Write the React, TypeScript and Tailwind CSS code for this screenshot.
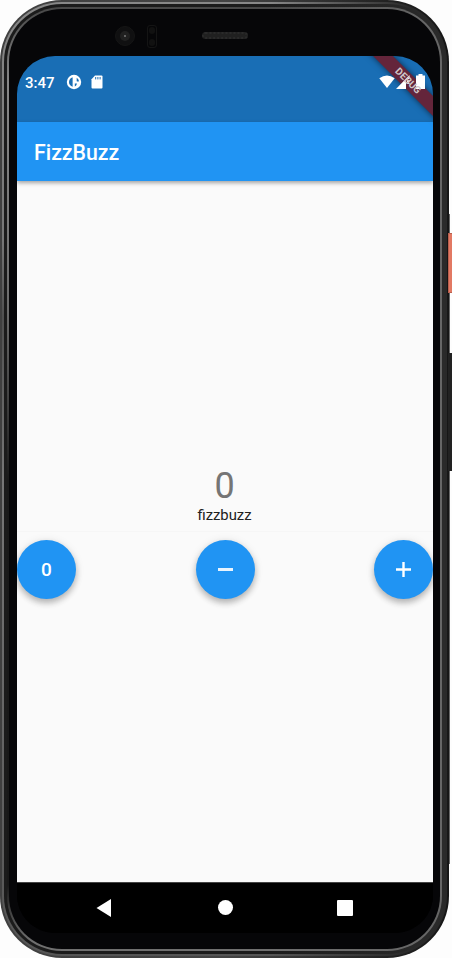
import React from "react";

function StatusBar() {
  return (
    <div className="flex h-[66px] shrink-0 items-start bg-[#196eb5] pl-[8px] pr-[8px] pt-[18px] text-white">
      <span className="w-[41px] text-[15px] font-medium leading-[18px]">3:47</span>
      <svg className="h-4 w-4" viewBox="0 0 16 16">
        <circle cx="8" cy="8" r="7.2" fill="#fff" />
        <path d="M6.600 3.200v9.600C4.400 12.200 3 10.300 3 8s1.400-4.200 3.600-4.800z" fill="#196eb5" />
        <path d="M10.700 3.700a4.800 4.800 0 0 1 2.300 3.500q-1.300.8-2.300 0z" fill="#196eb5" />
        <path d="M8.800 9.400H11q-.6 2.400-2.200 3z" fill="#196eb5" />
      </svg>
      <svg className="ml-[9px] mt-[1px] h-[14px] w-[12px]" viewBox="0 0 12 14">
        <path d="M4 0.500h6.500q1 0 1 1v11q0 1-1 1h-9q-1 0-1-1V4.200z" fill="#fff" />
        <path d="M4.700 2v2.400M6.900 2v2.400M9.100 2v2.400" stroke="#196eb5" strokeWidth="1" />
      </svg>
      <div className="relative z-30 ml-auto flex">
        <svg className="mt-px h-[14px] w-[16px]" viewBox="0 0 16 14">
          <path d="M0.300 3.200Q8-2.200 15.700 3.200L8 13z" fill="#fff" />
        </svg>
        <svg className="ml-px h-[15px] w-[14px]" viewBox="0 0 14 15">
          <path d="M0 15L13.500 1v4H10v10z" fill="#fff" />
          <path d="M11 6.500l2.500 3M13.500 6.500l-2.500 3" stroke="#fff" strokeWidth="1.200" />
        </svg>
        <svg className="ml-[6px] h-[15px] w-[9px]" viewBox="0 0 9 15">
          <path d="M2.500 0h4v1.500H9V15H0V1.500h2.500z" fill="#fff" />
        </svg>
      </div>
    </div>
  );
}

function FloatingButton({ children }: { children: React.ReactNode }) {
  return (
    <button className="flex h-[59px] w-[59px] items-center justify-center rounded-full bg-[#2094f3] text-[19px] font-medium text-white shadow-[0_4px_6px_rgba(0,0,0,0.24),0_1px_10px_rgba(0,0,0,0.10)]">
      {children}
    </button>
  );
}

function NavigationBar() {
  return (
    <div className="flex h-[51px] shrink-0 items-center border-t border-[#444] bg-black pb-px">
      <svg className="ml-[79px] h-[18px] w-[15px]" viewBox="0 0 15 18">
        <path d="M15 0v18L0.500 9z" fill="#fff" />
      </svg>
      <div className="ml-[107px] h-[15px] w-[15px] rounded-full bg-white" />
      <div className="ml-[104px] h-4 w-4 rounded-[1px] bg-white" />
    </div>
  );
}

function Screen() {
  return (
    <div className="relative flex h-[877px] w-[416px] flex-col overflow-hidden rounded-[38px] bg-black">
      <StatusBar />
      <header className="z-10 flex h-[59px] shrink-0 items-center bg-[#2094f3] pl-[17px] pt-[3px] text-[21.300px] font-medium text-white shadow-[0_2px_4px_rgba(0,0,0,0.35)]">
        FizzBuzz
      </header>
      <main className="flex grow flex-col bg-[#fafafa] pt-[285px]">
        <div className="pr-px text-center text-[36px] leading-[40px] text-[#757575]">0</div>
        <div className="pr-px text-center text-[14.800px] leading-[18px] text-[#202020]">fizzbuzz</div>
        <div className="mt-[7px] border-t border-[#f6f6f6]" />
        <div className="mt-[8px] flex justify-between">
          <FloatingButton>
            <span className="pt-[2px]">0</span>
          </FloatingButton>
          <FloatingButton>
            <span className="h-[3px] w-[15px] bg-white/90" />
          </FloatingButton>
          <FloatingButton>
            <svg className="h-[15px] w-[15px]" viewBox="0 0 15 15">
              <path d="M7.500 0v15M0 7.500h15" stroke="#fff" strokeWidth="2.400" />
            </svg>
          </FloatingButton>
        </div>
      </main>
      <NavigationBar />
      <div className="absolute right-[-35px] top-[18px] z-20 h-[14px] w-[120px] rotate-45 bg-[#64253b] shadow-[0_0_6px_rgba(0,0,0,0.6)]" />
      <div className="absolute right-[-35px] top-[18px] z-40 h-[14px] w-[120px] rotate-45 text-center text-[10px] font-bold leading-[14px] text-[#cfc5c8]">
        DEBUG
      </div>
    </div>
  );
}

export default function App() {
  return (
    <div className="relative h-[958px] w-[452px] overflow-hidden bg-[#fdfdfd] font-[Roboto,sans-serif]">
      <div className="absolute left-[448px] top-[214px] h-[650px] w-[2px] bg-[#666]" />
      <div className="relative h-[958px] w-[449px] rounded-[62px] bg-[linear-gradient(90deg,#404040_0,#444_50%,#161616_100%)] p-[2px]">
        <div className="h-full rounded-[60px] bg-[linear-gradient(90deg,transparent_60%,#292929_92%),linear-gradient(180deg,#888_0,#777_25%,#505050_33%,#777_50%,#555_100%)] p-[2px]">
          <div className="h-full rounded-[58px] bg-[linear-gradient(90deg,#1b1b1b_0,#1b1b1b_60%,#2a2a2a_98%)] p-[3px]">
            <div className="h-full rounded-[55px] bg-[linear-gradient(90deg,transparent_60%,#666_96%),linear-gradient(180deg,#484848_0,#888_8%,#6d6d6d_32%,#1a1a1a_50%,#181818_93%,#707070_99%)] p-[2px]">
              <div className="flex h-full flex-col rounded-[53px] bg-[#060608] pl-[8px]">
                <div className="flex h-[47px] shrink-0">
                  <div className="ml-[98px] mt-[17px] flex h-[20px] w-[20px] items-center justify-center rounded-full border border-[#151515] bg-[#101011]">
                    <div className="flex h-[10px] w-[10px] items-center justify-center rounded-full bg-[#202020]">
                      <div className="h-[2px] w-[2px] rounded-full bg-[#777]" />
                    </div>
                  </div>
                  <div className="ml-[12px] mt-[16px] flex h-[23px] w-[10px] flex-col justify-between rounded-[3px] border border-[#141414] p-[1px]">
                    <div className="h-[7px] rounded-full bg-[#111]" />
                    <div className="h-[7px] rounded-full bg-[#111]" />
                  </div>
                  <div className="ml-[45px] mt-[23px] h-[7px] w-[46px] rounded-full border-2 border-dotted border-[#2a2a2a] bg-[#202020]" />
                </div>
                <Screen />
              </div>
            </div>
          </div>
        </div>
      </div>
      <div className="absolute left-[448px] top-[233px] h-[60px] w-[5px] border border-[#b9604e] bg-[#e27963]" />
      <div className="absolute left-[448px] top-[353px] h-[118px] w-[4px] bg-[#222]" />
    </div>
  );
}
